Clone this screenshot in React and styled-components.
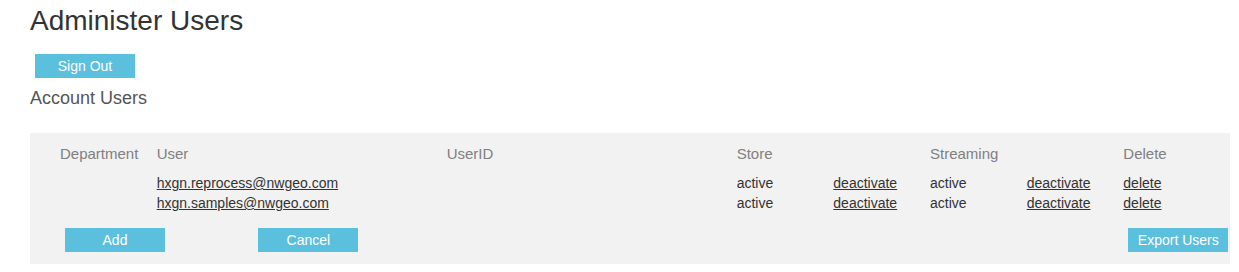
import React from "react";
import styled, { createGlobalStyle } from "styled-components";

const GlobalStyle = createGlobalStyle`
  html, body { margin: 0; padding: 0; background: #fff; }
  body { font-family: "Liberation Sans", Arial, sans-serif; color: #333; }
`;

const Page = styled.div`
  padding-left: 30px;
  padding-top: 5px;
`;

const Title = styled.h1`
  margin: 0;
  font-size: 28px;
  line-height: 32px;
  font-weight: normal;
  color: #333;
`;

const Button = styled.button`
  display: block;
  width: 100px;
  height: 24px;
  padding: 0;
  border: none;
  background: #5bc0de;
  color: #fff;
  font-family: "Liberation Sans", Arial, sans-serif;
  font-size: 14px;
  line-height: 24px;
  text-align: center;
  cursor: pointer;
  margin-left: 5px;
`;

const SignOut = styled(Button)`
  margin-top: 17px;
`;

const Subtitle = styled.h2`
  margin: 10px 0 0;
  font-size: 18px;
  line-height: 20px;
  font-weight: normal;
  color: #555;
`;

const Panel = styled.div`
  margin-top: 25px;
  width: 1200px;
  box-sizing: border-box;
  background: #f2f2f2;
  padding: 11px 10px 12px 30px;
`;

const Grid = styled.div`
  display: grid;
  grid-template-columns: repeat(12, minmax(0, 1fr));
  width: 1160px;
  margin-top: ${(p) => p.$mt || 0}px;
`;

const Cell = styled.div`
  grid-column: span ${(p) => p.$span || 1};
  font-size: ${(p) => (p.$head ? 15 : 14)}px;
  line-height: 20px;
  color: ${(p) => (p.$head ? "#808080" : "#333")};
  white-space: nowrap;
`;

const Link = styled.a`
  color: #333;
  text-decoration: underline;
  cursor: pointer;
`;

const ButtonSlot = styled.div`
  grid-column: ${(p) => p.$col} / span 1;
  white-space: nowrap;
`;

const users = ["hxgn.reprocess@nwgeo.com", "hxgn.samples@nwgeo.com"];

export default function App() {
  return (
    <>
      <GlobalStyle />
      <Page>
        <Title>Administer Users</Title>
        <SignOut>Sign Out</SignOut>
        <Subtitle>Account Users</Subtitle>
        <Panel>
          <Grid>
            <Cell $head>Department</Cell>
            <Cell $head $span={3}>User</Cell>
            <Cell $head $span={3}>UserID</Cell>
            <Cell $head $span={2}>Store</Cell>
            <Cell $head $span={2}>Streaming</Cell>
            <Cell $head>Delete</Cell>
          </Grid>
          <Grid $mt={9}>
            {users.map((u) => (
              <React.Fragment key={u}>
                <Cell />
                <Cell $span={3}><Link>{u}</Link></Cell>
                <Cell $span={3} />
                <Cell>active</Cell>
                <Cell><Link>deactivate</Link></Cell>
                <Cell>active</Cell>
                <Cell><Link>deactivate</Link></Cell>
                <Cell><Link>delete</Link></Cell>
              </React.Fragment>
            ))}
          </Grid>
          <Grid $mt={15}>
            <ButtonSlot $col={1}><Button>Add</Button></ButtonSlot>
            <ButtonSlot $col={3}><Button>Cancel</Button></ButtonSlot>
            <ButtonSlot $col={12}><Button>Export Users</Button></ButtonSlot>
          </Grid>
        </Panel>
      </Page>
    </>
  );
}
